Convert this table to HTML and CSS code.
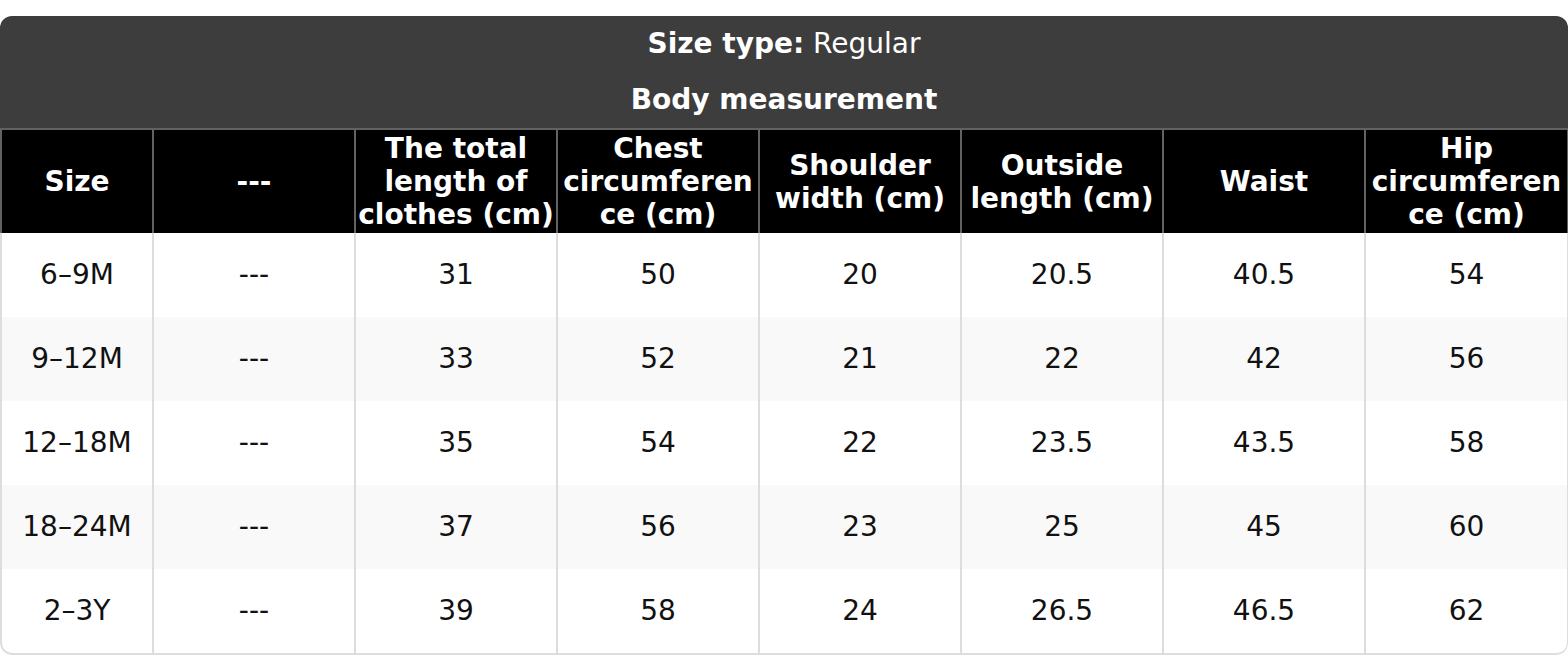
FILE: index.html
```html
<!DOCTYPE html>
<html lang="en">
<head>
<meta charset="utf-8">
<title>Size chart</title>
<link rel="stylesheet" href="styles.css">
</head>
<body>
<div class="chart">
  <div class="title">
    <div class="title-line"><strong>Size type:</strong> Regular</div>
    <div class="title-line"><strong>Body measurement</strong></div>
  </div>
  <table class="sizes">
    <colgroup>
      <col class="c-first">
      <col class="c"><col class="c"><col class="c"><col class="c"><col class="c"><col class="c"><col class="c-last">
    </colgroup>
    <thead>
      <tr>
        <th>Size</th>
        <th>---</th>
        <th>The total length of clothes (cm)</th>
        <th>Chest circumference (cm)</th>
        <th>Shoulder width (cm)</th>
        <th>Outside length (cm)</th>
        <th>Waist</th>
        <th>Hip circumference (cm)</th>
      </tr>
    </thead>
    <tbody>
      <tr><td>6–9M</td><td>---</td><td>31</td><td>50</td><td>20</td><td>20.5</td><td>40.5</td><td>54</td></tr>
      <tr><td>9–12M</td><td>---</td><td>33</td><td>52</td><td>21</td><td>22</td><td>42</td><td>56</td></tr>
      <tr><td>12–18M</td><td>---</td><td>35</td><td>54</td><td>22</td><td>23.5</td><td>43.5</td><td>58</td></tr>
      <tr><td>18–24M</td><td>---</td><td>37</td><td>56</td><td>23</td><td>25</td><td>45</td><td>60</td></tr>
      <tr><td>2–3Y</td><td>---</td><td>39</td><td>58</td><td>24</td><td>26.5</td><td>46.5</td><td>62</td></tr>
    </tbody>
  </table>
</div>
</body>
</html>
```

FILE: styles.css
```css
html, body {
  margin: 0;
  padding: 0;
  background: #ffffff;
}

body {
  padding-top: 16px;
  font-family: "DejaVu Sans", "Noto Sans", sans-serif;
  font-size: 28px;
}

.chart {
  width: 1568px;
  border-radius: 12px;
  overflow: hidden;
  background: #ffffff;
}

.title {
  background: #3d3d3d;
  color: #ffffff;
  text-align: center;
}

.title-line {
  line-height: 33px;
  padding: 11px 0 12px;
}

.title-line strong {
  font-weight: bold;
}

.sizes {
  width: 1568px;
  table-layout: fixed;
  border-collapse: separate;
  border-spacing: 0;
}

.c-first {
  width: 154px;
}

.c {
  width: 202px;
}

.c-last {
  width: 203px;
}

.sizes th {
  background: #000000;
  color: #ffffff;
  font-weight: bold;
  line-height: 33px;
  padding: 2px 0;
  border-top: 2px solid #626262;
  border-right: 2px solid #626262;
  overflow-wrap: break-word;
  word-wrap: break-word;
  text-align: center;
  vertical-align: middle;
}

.sizes th:first-child {
  border-left: 2px solid #626262;
}

.sizes td {
  color: #111111;
  line-height: 34px;
  padding: 25px 2px;
  text-align: center;
  border-right: 2px solid #dddddd;
}

.sizes td:first-child {
  border-left: 2px solid #dddddd;
}

.sizes tbody tr:nth-child(even) td {
  background: #f9f9f9;
}

.sizes tbody tr:last-child td {
  border-bottom: 2px solid #dddddd;
}

.sizes tbody tr:last-child td:first-child {
  border-bottom-left-radius: 12px;
}

.sizes tbody tr:last-child td:last-child {
  border-bottom-right-radius: 12px;
}
```
